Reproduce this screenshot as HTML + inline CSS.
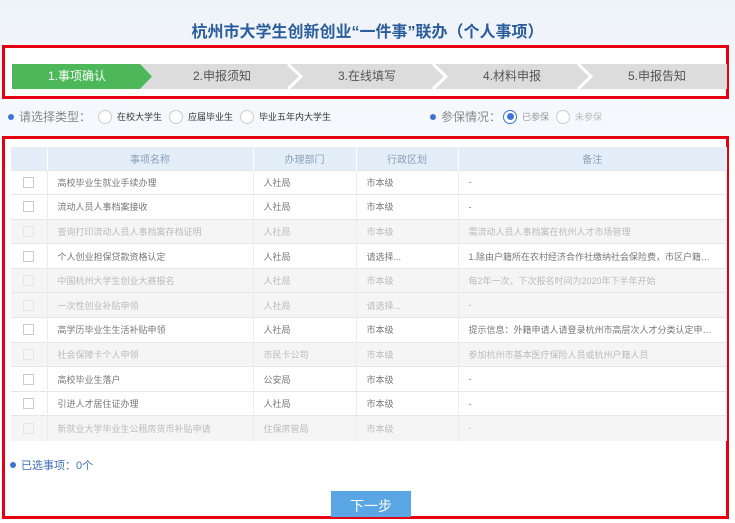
<!DOCTYPE html>
<html><head><meta charset="utf-8"><style>
*{margin:0;padding:0;box-sizing:border-box}
body{width:735px;height:523px;overflow:hidden;background:#fff;font-family:"Liberation Sans","Noto Sans CJK SC",sans-serif;position:relative}
.top{position:absolute;left:0;top:0;width:735px;height:140px;background:linear-gradient(#eef3f9,#f6f9fc)}
.title{position:absolute;top:18px;left:0;width:735px;text-align:center;font-size:16px;font-weight:bold;color:#2b5d9c}
.box1{position:absolute;left:2px;top:45px;width:727px;height:54px;border:3px solid #e60012;background:#fff}
.steps{position:absolute;left:7px;top:16px;width:715px;height:25px;background:#dcdcdc}
.st{position:absolute;top:0;height:25px;line-height:25px;font-size:12px;color:#555;text-align:center}
.g{position:absolute;left:0;top:0;width:140px;height:25px;background:#4cb85a;clip-path:polygon(0 0,128px 0,140px 12.5px,128px 25px,0 25px)}
.radio{position:absolute;top:108px;font-size:12px;color:#888;display:flex;align-items:center}
.dot{width:6px;height:6px;border-radius:50%;background:#3f73d8;margin-right:5px}
.rc{width:14px;height:14px;border:1px solid #ccc;border-radius:50%;margin:0 5px 0 7px;background:#fff}
.sm{font-size:9px;color:#333}
.box2{position:absolute;left:2px;top:136px;width:727px;height:383px;border:3px solid #e60012;background:#fff}
table{position:absolute;left:6px;top:8px;width:716px;border-collapse:collapse;font-size:9px;color:#777;table-layout:fixed}
th{height:23px;background:#e4eef9;color:#8aa0b8;font-weight:normal;font-size:10px;border-right:1px solid #fff}
td{height:24.6px;border-top:1px solid #e6e6e6;border-right:1px solid #ececec;padding-left:10px;padding-right:8px;white-space:nowrap;overflow:hidden;text-overflow:ellipsis}
td:first-child{padding-left:0;padding-right:0;text-align:center}
tr.d td{background:#f5f5f5;color:#bbb}
.cb{display:inline-block;width:11px;height:11px;border:1px solid #ccc;background:#fff;vertical-align:middle}
tr.d .cb{border-color:#e6e6e6;background:#f5f5f5}
.sel{position:absolute;left:5px;top:318px;font-size:11px;color:#3f6fb8;display:flex;align-items:center}
.btn{position:absolute;left:326px;top:352px;width:80px;height:26px;background:#5aa5e4;color:#fff;font-size:14px;text-align:center;line-height:30px}
</style></head><body>
<div class="top"></div>
<div class="title">杭州市大学生创新创业“一件事”联办（个人事项）</div>
<div class="box1"><div class="steps">
<div class="g"></div>
<div class="st" style="left:0;width:130px;color:#fff">1.事项确认</div>
<div class="st" style="left:140px;width:140px">2.申报须知</div>
<div class="st" style="left:285px;width:140px">3.在线填写</div>
<div class="st" style="left:430px;width:140px">4.材料申报</div>
<div class="st" style="left:575px;width:140px">5.申报告知</div>
<svg style="position:absolute;left:0;top:0" width="715" height="25"><g fill="none" stroke="#fff" stroke-width="3"><path d="M276 0L289 12.5L276 25"/><path d="M421 0L434 12.5L421 25"/><path d="M566 0L579 12.5L566 25"/></g></svg>
</div></div>
<div class="radio" style="left:8px"><span class="dot"></span>请选择类型：<span class="rc"></span><span class="sm">在校大学生</span><span class="rc"></span><span class="sm">应届毕业生</span><span class="rc"></span><span class="sm">毕业五年内大学生</span></div>
<div class="radio" style="left:430px"><span class="dot"></span>参保情况：<span class="rc" style="border-color:#3f73d8;display:flex;align-items:center;justify-content:center;margin-left:2px"><span style="width:7px;height:7px;border-radius:50%;background:#3f73d8"></span></span><span class="sm" style="color:#999">已参保</span><span class="rc"></span><span class="sm" style="color:#bbb">未参保</span></div>
<div class="box2">
<table>
<colgroup><col style="width:36px"><col style="width:206px"><col style="width:103px"><col style="width:102px"><col></colgroup>
<tr><th></th><th>事项名称</th><th>办理部门</th><th>行政区划</th><th>备注</th></tr>
<tr><td><span class="cb"></span></td><td>高校毕业生就业手续办理</td><td>人社局</td><td>市本级</td><td>-</td></tr>
<tr><td><span class="cb"></span></td><td>流动人员人事档案接收</td><td>人社局</td><td>市本级</td><td>-</td></tr>
<tr class="d"><td><span class="cb"></span></td><td>查询打印流动人员人事档案存档证明</td><td>人社局</td><td>市本级</td><td>需流动人员人事档案在杭州人才市场管理</td></tr>
<tr><td><span class="cb"></span></td><td>个人创业担保贷款资格认定</td><td>人社局</td><td>请选择...</td><td>1.除由户籍所在农村经济合作社缴纳社会保险费，市区户籍人员以灵活就业人员</td></tr>
<tr class="d"><td><span class="cb"></span></td><td>中国杭州大学生创业大赛报名</td><td>人社局</td><td>市本级</td><td>每2年一次，下次报名时间为2020年下半年开始</td></tr>
<tr class="d"><td><span class="cb"></span></td><td>一次性创业补贴申领</td><td>人社局</td><td>请选择...</td><td>-</td></tr>
<tr><td><span class="cb"></span></td><td>高学历毕业生生活补贴申领</td><td>人社局</td><td>市本级</td><td>提示信息：外籍申请人请登录杭州市高层次人才分类认定申报管理系统</td></tr>
<tr class="d"><td><span class="cb"></span></td><td>社会保障卡个人申领</td><td>市民卡公司</td><td>市本级</td><td>参加杭州市基本医疗保险人员或杭州户籍人员</td></tr>
<tr><td><span class="cb"></span></td><td>高校毕业生落户</td><td>公安局</td><td>市本级</td><td>-</td></tr>
<tr><td><span class="cb"></span></td><td>引进人才居住证办理</td><td>人社局</td><td>市本级</td><td>-</td></tr>
<tr class="d"><td><span class="cb"></span></td><td>新就业大学毕业生公租房货币补贴申请</td><td>住保房管局</td><td>市本级</td><td>-</td></tr>
</table>
<div class="sel"><span class="dot"></span>已选事项：0个</div>
<div class="btn">下一步</div>
</div>
</body></html>
